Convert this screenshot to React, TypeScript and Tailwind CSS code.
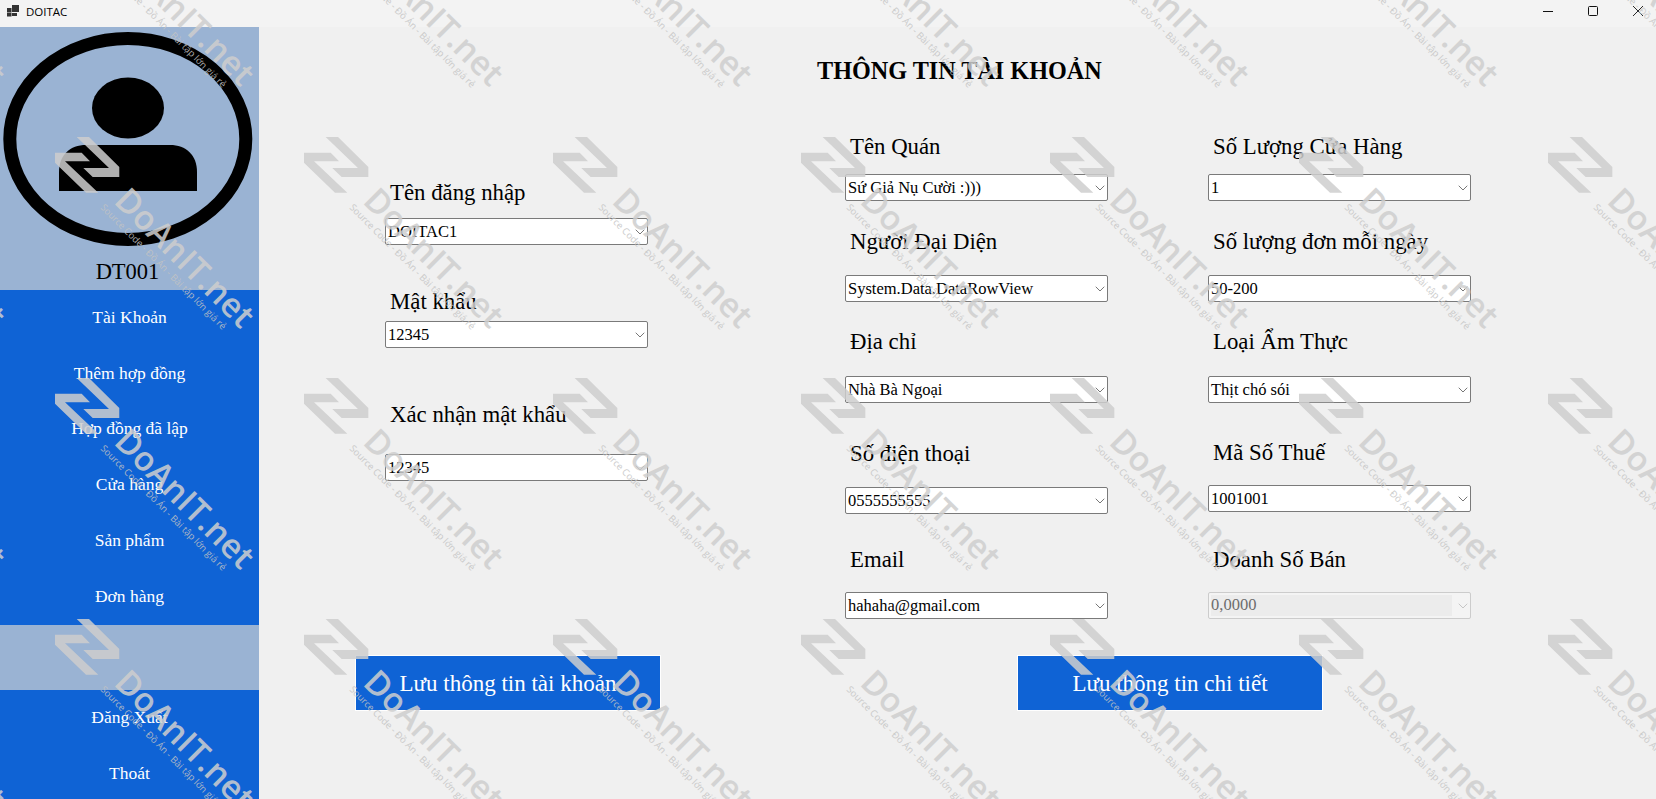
import { ChevronDown } from "lucide-react";

const SERIF = "font-['Liberation_Serif',serif]";

type FieldProps = {
  label: string;
  value: string;
  top: string;
  gap: string;
  disabled?: boolean;
};

const leftFields: FieldProps[] = [
  { label: "Tên đăng nhập", value: "DOITAC1", top: "mt-[88px]", gap: "mt-[11px]" },
  { label: "Mật khẩu", value: "12345", top: "mt-[43px]", gap: "mt-[5px]" },
  { label: "Xác nhận mật khẩu", value: "12345", top: "mt-[53px]", gap: "mt-[25px]" },
];

const middleFields: FieldProps[] = [
  { label: "Tên Quán", value: "Sứ Giả Nụ Cười :)))", top: "mt-[42px]", gap: "mt-[13px]" },
  { label: "Người Đại Diện", value: "System.Data.DataRowView", top: "mt-[27px]", gap: "mt-[19px]" },
  { label: "Địa chỉ", value: "Nhà Bà Ngoại", top: "mt-[26px]", gap: "mt-[20px]" },
  { label: "Số điện thoại", value: "0555555555", top: "mt-[37px]", gap: "mt-[19px]" },
  { label: "Email", value: "hahaha@gmail.com", top: "mt-[32px]", gap: "mt-[18px]" },
];

const rightFields: FieldProps[] = [
  { label: "Số Lượng Cửa Hàng", value: "1", top: "mt-[42px]", gap: "mt-[13px]" },
  { label: "Số lượng đơn mỗi ngày", value: "50-200", top: "mt-[27px]", gap: "mt-[19px]" },
  { label: "Loại Ẩm Thực", value: "Thịt chó sói", top: "mt-[26px]", gap: "mt-[20px]" },
  { label: "Mã Số Thuế", value: "1001001", top: "mt-[36px]", gap: "mt-[18px]" },
  { label: "Doanh Số Bán", value: "0,0000", top: "mt-[34px]", gap: "mt-[18px]", disabled: true },
];

const menuTop = ["Tài Khoản", "Thêm hợp đồng", "Hợp đồng đã lập", "Cửa hàng", "Sản phẩm", "Đơn hàng"];
const menuBottom = ["Đăng Xuất", "Thoát"];

function Field({ label, value, top, gap, disabled = false }: FieldProps) {
  return (
    <div className={top}>
      <p className="ml-[5px] h-7 text-[22.8px] leading-7 whitespace-nowrap text-black">{label}</p>
      <div
        className={
          disabled
            ? `${gap} flex h-[27px] w-[263px] items-center rounded-[2px] border border-[#cccccc] bg-[#f4f4f4] p-[2px] text-[16.5px] text-[#6d6d6d]`
            : `${gap} flex h-[27px] w-[263px] items-center rounded-[2px] border border-[#7a7a7a] bg-white p-[2px] text-[16.5px] text-black`
        }
      >
        <span className={disabled ? "h-full flex-1 bg-[#ececec] leading-[20px]" : "flex-1 leading-[20px] whitespace-nowrap"}>
          {value}
        </span>
        <ChevronDown
          className={disabled ? "-mr-[3px] ml-[3px] h-4 w-4 text-[#b5b5b5]" : "-mr-[3px] ml-[3px] h-4 w-4 text-[#444444]"}
          strokeWidth={1.1}
        />
      </div>
    </div>
  );
}

function MenuButton({ label }: { label: string }) {
  return <div className="flex h-[55.83px] shrink-0 items-center justify-center pb-[2px] text-[17.5px] text-white">{label}</div>;
}

function Avatar() {
  return (
    <svg viewBox="0 0 259 225" className="h-[225px] w-[259px] shrink-0">
      <ellipse cx="127.8" cy="112" rx="118" ry="100.5" fill="none" stroke="#000" strokeWidth="13" />
      <ellipse cx="128" cy="81" rx="36" ry="30.5" fill="#000" />
      <path d="M59 164V145C59 128 70 118 86 118H170C186 118 197 128 197 145V164Z" fill="#000" />
    </svg>
  );
}

function WatermarkTile() {
  return (
    <div className="relative h-[241.4px] w-[248.83px] shrink-0">
      <svg viewBox="0 0 65 56" className="absolute top-0 left-0 h-14 w-[65px]">
        <path d="M21.7 0H34L64.3 30V40H37.7L28.3 31H54Z" fill="#cecece" />
        <path d="M0 15.7H26.7L35 24.3H10L43.3 55.7H31L0 25.7Z" fill="#cecece" />
      </svg>
      <span className="absolute top-[35px] left-[55px] origin-bottom-left rotate-45 font-['Open_Sans',sans-serif] text-[33.5px] leading-[33px] font-semibold whitespace-nowrap text-[#cecece]">
        DoAnIT.net
      </span>
      <span className="absolute top-[64px] left-[52px] origin-top-left rotate-45 font-['Open_Sans',sans-serif] text-[9.5px] leading-[13px] whitespace-nowrap text-[#c4c4c4]">
        Source Code - Đồ Án - Bài tập lớn giá rẻ
      </span>
    </div>
  );
}

function Watermark() {
  return (
    <div className="pointer-events-none absolute inset-0 overflow-hidden opacity-85">
      <div className="-mt-[104.9px] -ml-[193.83px] flex w-[2000px] flex-wrap">
        {Array.from({ length: 40 }, (_, i) => (
          <WatermarkTile key={i} />
        ))}
      </div>
    </div>
  );
}

function WindowControls() {
  return (
    <div className="mb-[5px] ml-auto flex items-center gap-[35px] pr-[13px] text-[#111111]">
      <svg viewBox="0 0 10 10" className="h-2.5 w-2.5" fill="none" stroke="currentColor">
        <path d="M0 5.5H10" />
      </svg>
      <svg viewBox="0 0 10 10" className="h-2.5 w-2.5" fill="none" stroke="currentColor">
        <rect x="0.5" y="0.5" width="9" height="9" rx="1" />
      </svg>
      <svg viewBox="0 0 10 10" className="h-2.5 w-2.5" fill="none" stroke="currentColor" strokeWidth="0.9">
        <path d="M0 0L10 10M10 0L0 10" />
      </svg>
    </div>
  );
}

export default function App() {
  return (
    <div className={`relative flex h-[799px] w-[1656px] flex-col overflow-hidden bg-[#f0f0f0] ${SERIF}`}>
      <header className="flex h-[27px] shrink-0 items-center bg-[#f3f3f3] text-black">
        <svg viewBox="0 0 12 12" className="mb-[5px] ml-[7px] h-3 w-3" fill="#333333">
          <rect x="5" y="0" width="7" height="7" />
          <rect x="0" y="3" width="4.5" height="4" />
          <rect x="0" y="7.5" width="4.5" height="4" />
          <rect x="5" y="8" width="5" height="3" />
        </svg>
        <span className="mb-[4px] ml-[7px] font-['Open_Sans',sans-serif] text-[11.5px]">DOITAC</span>
        <WindowControls />
      </header>

      <div className="flex min-h-0 flex-1">
        <aside className="flex w-[259px] shrink-0 flex-col overflow-hidden bg-[#9ab3d3]">
          <Avatar />
          <p className="mt-[2px] mr-[4px] mb-[1px] h-[35px] shrink-0 text-center text-[22.5px] leading-[35px] text-black">DT001</p>
          <nav className="flex shrink-0 flex-col bg-[#0f63d5]">
            {menuTop.map((item) => (
              <MenuButton key={item} label={item} />
            ))}
          </nav>
          <div className="h-[65px] shrink-0" />
          <nav className="flex shrink-0 flex-col bg-[#0f63d5]">
            {menuBottom.map((item) => (
              <MenuButton key={item} label={item} />
            ))}
          </nav>
        </aside>

        <main className="min-w-0 flex-1">
          <h1 className="mt-[24px] ml-[558px] h-10 text-[24.2px] leading-10 font-bold whitespace-nowrap text-black">
            THÔNG TIN TÀI KHOẢN
          </h1>

          <div className="ml-[126px] flex items-start">
            <div className="w-[263px]">
              {leftFields.map((field) => (
                <Field key={field.label} {...field} />
              ))}
            </div>
            <div className="ml-[197px] w-[263px]">
              {middleFields.map((field) => (
                <Field key={field.label} {...field} />
              ))}
            </div>
            <div className="ml-[100px] w-[263px]">
              {rightFields.map((field) => (
                <Field key={field.label} {...field} />
              ))}
            </div>
          </div>

          <div className="mt-[36px] ml-[96px] flex gap-[356px]">
            <button className="flex h-14 w-[306px] items-center justify-center border border-white bg-[#0f63d5] pt-[2px] text-[23px] text-white">
              Lưu thông tin tài khoản
            </button>
            <button className="flex h-14 w-[306px] items-center justify-center border border-white bg-[#0f63d5] pt-[2px] text-[23px] text-white">
              Lưu thông tin chi tiết
            </button>
          </div>
        </main>
      </div>

      <Watermark />
    </div>
  );
}
